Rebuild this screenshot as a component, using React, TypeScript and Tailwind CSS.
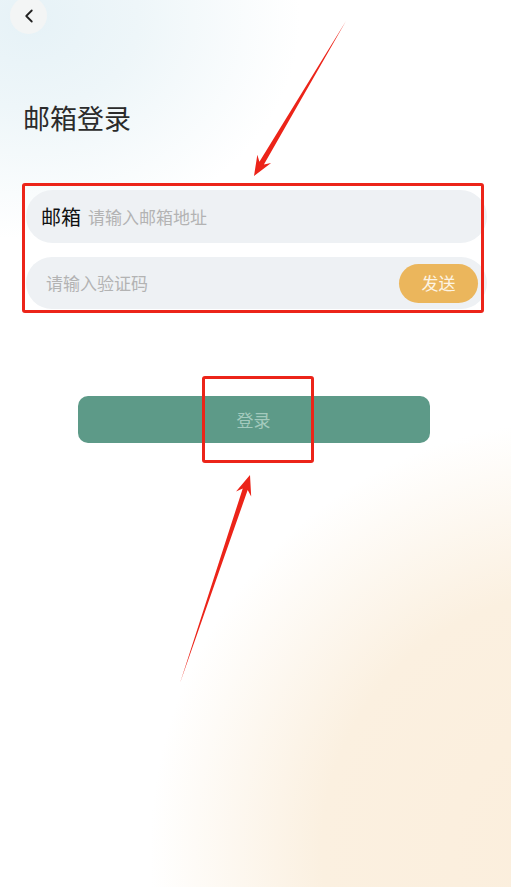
import { ChevronLeft } from "lucide-react";

// tapered annotation arrow: thin tail, thicker shaft near the head, solid head
function Arrow({ x1, y1, x2, y2 }: { x1: number; y1: number; x2: number; y2: number }) {
  const dx = x2 - x1;
  const dy = y2 - y1;
  const len = Math.hypot(dx, dy);
  const ux = dx / len;
  const uy = dy / len;
  const px = -uy;
  const py = ux;
  const head = 20;
  const headW = 8;
  const shaftW = 2.6;
  const bx = x2 - ux * head;
  const by = y2 - uy * head;
  const nx = x2 - ux * (head - 5);
  const ny = y2 - uy * (head - 5);
  const pts = [
    [x1, y1],
    [nx + px * shaftW, ny + py * shaftW],
    [bx + px * headW, by + py * headW],
    [x2, y2],
    [bx - px * headW, by - py * headW],
    [nx - px * shaftW, ny - py * shaftW],
  ]
    .map((p) => p.join(","))
    .join(" ");
  return <polygon points={pts} fill="#ec2419" />;
}

export default function App() {
  return (
    <div
      className="relative w-[511px] h-[887px] overflow-hidden bg-white bg-[radial-gradient(ellipse_270px_220px_at_30px_20px,#e6f2f7_0%,#eef6f9_40%,rgba(255,255,255,0)_100%),radial-gradient(circle_430px_at_580px_850px,#fbeedc_0%,#fbf0e0_60%,rgba(255,255,255,0)_100%)]"
      style={{ fontFamily: '"Noto Sans CJK SC", "Noto Sans", sans-serif' }}
    >
      <div className="flex flex-col">
        <div className="ml-[10px] mt-[-3px] w-[37px] h-[37px] rounded-full bg-[#f3f5f5] flex items-center justify-center text-[#222]">
          <ChevronLeft size={22} strokeWidth={2} />
        </div>

        <h1 className="ml-[23px] mt-[66px] text-[27px] leading-[36px] text-[#2b2b2b] font-normal">
          邮箱登录
        </h1>

        <div className="ml-[26px] mt-[54px] w-[461px] flex flex-col gap-[14px]">
          <div className="h-[53px] rounded-full bg-[#eef1f4] flex items-center pl-[15px]">
            <span className="text-[20px] text-[#111]">邮箱</span>
            <span className="ml-[7px] text-[17px] text-[#b3b3b3]">请输入邮箱地址</span>
          </div>
          <div className="h-[52px] rounded-full bg-[#eef1f4] flex items-center justify-between pl-[20px] pr-[9px]">
            <span className="text-[17px] text-[#b3b3b3]">请输入验证码</span>
            <div className="w-[79px] h-[39px] rounded-full bg-[#ebb65c] flex items-center justify-center text-[17px] text-[#fdf4e4]">
              发送
            </div>
          </div>
        </div>

        <div className="ml-[38px] w-[431px] mt-[60px] pt-[27px] rounded-t-[40px] bg-gradient-to-b from-white/0 to-white/80 flex justify-center">
          <div className="w-[352px] h-[47px] rounded-[10px] bg-[#5d9a88] flex items-center justify-center text-[17px] text-[#a3cabd]">
            登录
          </div>
        </div>
      </div>

      {/* annotations */}
      <div className="absolute left-[22px] top-[183px] w-[462px] h-[130px] border-[3px] border-[#ec2419] rounded-[3px]" />
      <div className="absolute left-[202px] top-[376px] w-[112px] h-[87px] border-[3px] border-[#ec2419] rounded-[3px]" />
      <svg className="absolute left-0 top-0" width={511} height={887}>
        <Arrow x1={346} y1={21} x2={254} y2={176} />
        <Arrow x1={180} y1={683} x2={250} y2={475} />
      </svg>
    </div>
  );
}
